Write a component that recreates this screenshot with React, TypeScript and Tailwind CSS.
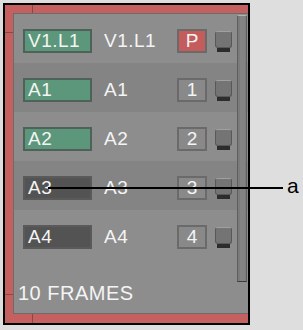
import React from 'react';

type Row = { code: string; name: string; tag: string; kind: 'green' | 'dark'; light: boolean };

const rows: Row[] = [
  { code: 'V1.L1', name: 'V1.L1', tag: 'P', kind: 'green', light: true },
  { code: 'A1', name: 'A1', tag: '1', kind: 'green', light: false },
  { code: 'A2', name: 'A2', tag: '2', kind: 'green', light: true },
  { code: 'A3', name: 'A3', tag: '3', kind: 'dark', light: false },
  { code: 'A4', name: 'A4', tag: '4', kind: 'dark', light: true },
];

function TrackRow({ row }: { row: Row }) {
  return (
    <div className={`flex h-[49px] items-start pt-[15px] pl-[9px] ${row.light ? 'bg-[#8d8d8d]' : 'bg-[#848484]'}`}>
      <div
        className={`flex h-[24px] w-[69px] items-center pl-[3px] pb-[1px] border-2 ${
          row.kind === 'green' ? 'bg-[#5c977b] border-[#4f6259]' : 'bg-[#535353] border-[#5a5a5a]'
        }`}
      >
        <span className="text-[19px] leading-[20px] tracking-[0.5px] text-[#f4f4f4]">{row.code}</span>
      </div>
      <div className="ml-[12px] flex h-[24px] w-[73px] items-center pb-[1px]">
        <span className="text-[19px] leading-[20px] tracking-[0.5px] text-[#f4f4f4]">{row.name}</span>
      </div>
      <div
        className={`flex h-[24px] w-[30px] items-center justify-center pb-[1px] border-2 border-[#6a6a6a] ${
          row.tag === 'P' ? 'bg-[#c45c5c]' : 'bg-[#898989]'
        }`}
      >
        <span className="text-[19px] leading-[20px] text-[#f4f4f4]">{row.tag}</span>
      </div>
      <div className="ml-[8px] flex flex-col items-center pt-[2px]">
        <div className="h-[17px] w-[17px] rounded-[3px] border border-[#585858] border-t-[#a0a0a0] bg-[#747474]" />
        <div className="h-[4px] w-[13px] bg-[#2c2c2c]" />
      </div>
    </div>
  );
}

export default function App() {
  return (
    <div className="relative h-[330px] w-[303px] bg-[#dedede] font-['Liberation_Sans',Arial,sans-serif]">
      <div className="absolute left-0 top-0 pl-[3px] pt-[3px]">
        <div className="flex h-[322px] w-[247px] flex-col border-2 border-black bg-[#c46060]">
          {/* top strip */}
          <div className="flex h-[8px] shrink-0">
            <div className="w-[28px] border-r border-[#874a4a]" />
          </div>
          <div className="flex flex-1">
            {/* left strip */}
            <div className="flex w-[8px] flex-col">
              <div className="h-[20px] border-b border-[#874a4a]" />
              <div className="flex-1" />
              <div className="h-[20px] border-t border-[#874a4a]" />
            </div>
            {/* panel */}
            <div className="relative flex flex-1 flex-col border-l border-t border-b border-[#6c6c6c] bg-[#8d8d8d]">
              {rows.map((r) => (
                <TrackRow key={r.code} row={r} />
              ))}
              <div className="mt-auto pb-[6px] pl-[4px]">
                <span className="text-[20px] leading-[19px] tracking-[0.5px] text-[#f4f4f4]">10 FRAMES</span>
              </div>
              {/* scrollbar */}
              <div className="absolute right-[1px] top-[1px] h-[267px] w-[10px] border border-[#5e5e5e] border-t-[#b4b4b4] border-b-[#3c3c3c] bg-[#7b7b7b]">
                <div className="ml-[2px] h-full w-[5px] bg-[#838383]" />
              </div>
            </div>
          </div>
          {/* bottom strip */}
          <div className="flex h-[9px] shrink-0">
            <div className="w-[28px] border-r border-[#874a4a]" />
          </div>
        </div>
      </div>
      {/* callout */}
      <div className="absolute left-[48px] top-[187px] h-[2px] w-[235px] bg-black" />
      <div className="absolute left-[287px] top-[174px] text-[21px] leading-[24px] text-black">a</div>
    </div>
  );
}
